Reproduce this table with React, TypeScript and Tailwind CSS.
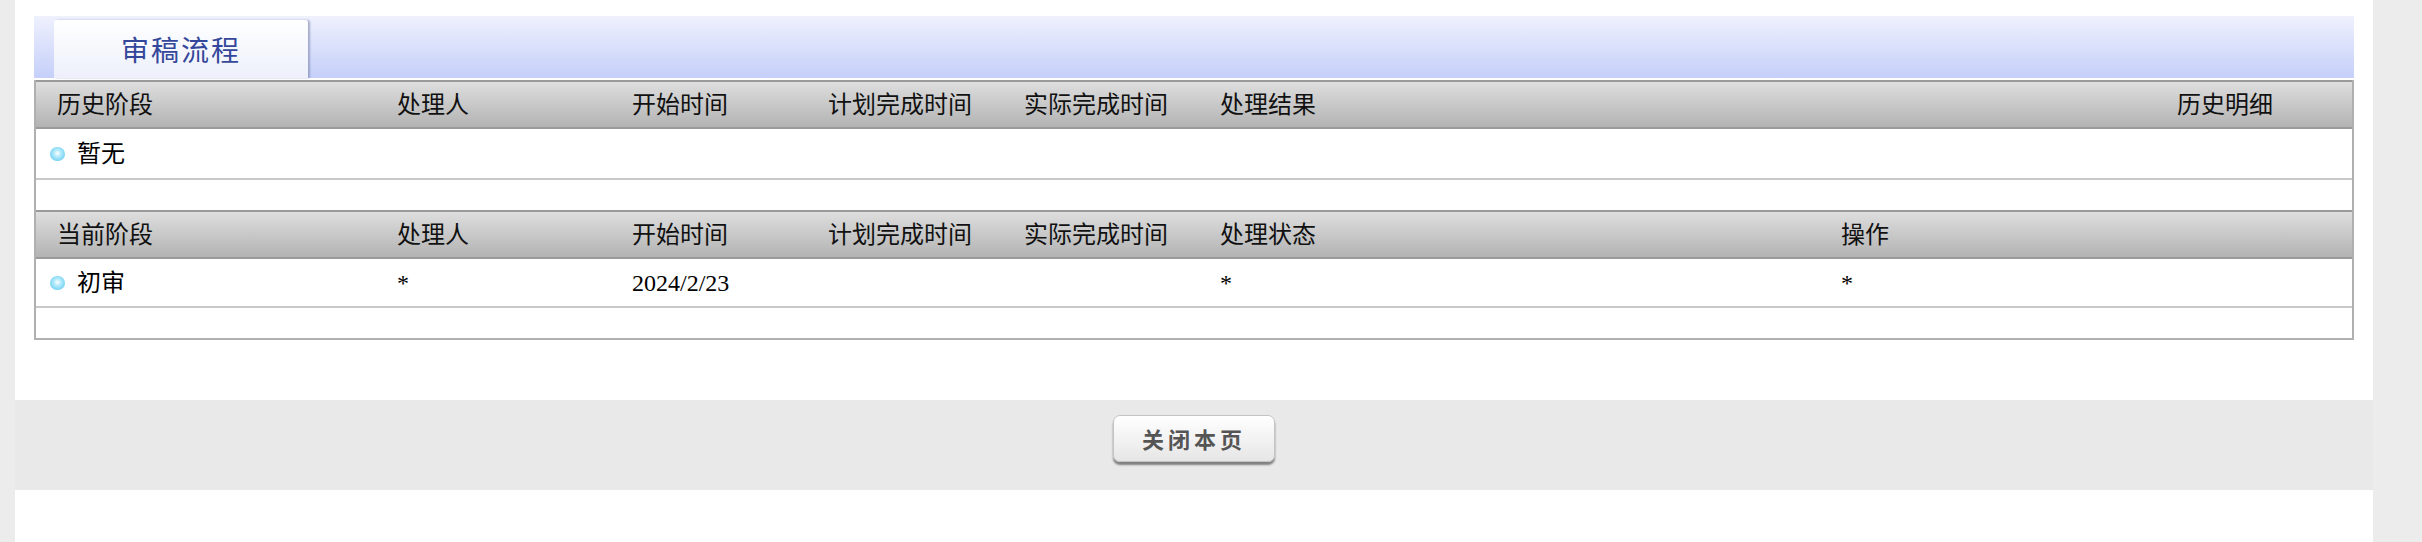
const font = { fontFamily: '"Liberation Serif", "Noto Sans CJK SC", serif' };

const historyHead = ['历史阶段', '处理人', '开始时间', '计划完成时间', '实际完成时间', '处理结果', '历史明细'];
const currentHead = ['当前阶段', '处理人', '开始时间', '计划完成时间', '实际完成时间', '处理状态', '操作'];
const currentRow = ['初审', '*', '2024/2/23', '', '', '*', '*'];

function Bullet() {
  return (
    <span className="inline-block w-[15px] h-[14px] rounded-full bg-[radial-gradient(circle_at_50%_45%,#ffffff_0%,#b8ecfc_30%,#4ec4ee_100%)] mr-[12px]" />
  );
}

function HeadRow({ cols, grid }: { cols: string[]; grid: string }) {
  return (
    <div className={`grid ${grid} h-[49px] border-y-2 border-[#9a9a9a] bg-gradient-to-b from-[#dedede] to-[#b3b3b3] text-[24px] text-[#111]`}>
      {cols.map((c, i) => (
        <div key={i} className="pl-[21px] flex items-center whitespace-nowrap">
          {c}
        </div>
      ))}
    </div>
  );
}

function DataRow({ cols, grid }: { cols: string[]; grid: string }) {
  return (
    <div className={`grid ${grid} h-[49px] border-b-2 border-[#c8c8c8] text-[24px] text-black`}>
      {cols.map((c, i) =>
        i === 0 ? (
          <div key={i} className="pl-[14px] flex items-center whitespace-nowrap">
            <Bullet />
            {c}
          </div>
        ) : (
          <div key={i} className="pl-[21px] flex items-center whitespace-nowrap">
            {c}
          </div>
        )
      )}
    </div>
  );
}

export default function App() {
  const histGrid = 'grid-cols-[340px_235px_196px_196px_196px_1fr_196px]';
  const curGrid = 'grid-cols-[340px_235px_196px_196px_196px_621px_1fr]';

  return (
    <div className="flex h-[542px] w-full bg-[#ececec]" style={font}>
      <div className="w-[15px] shrink-0" />
      <div className="flex-1 bg-white flex flex-col">
        <div className="px-[19px] pt-[16px]">
          {/* tab bar */}
          <div className="h-[62px] bg-gradient-to-b from-[#eff1fd] to-[#c5cff9] flex items-end pl-[20px]">
            <div className="w-[254px] h-[58px] bg-gradient-to-b from-white to-[#edf0fb] rounded-t-[3px] shadow-[2px_0_2px_rgba(120,130,170,0.6)] flex items-center justify-center">
              <span className="text-[28px] text-[#34479a] tracking-[2px]" style={{ fontFamily: '"Noto Sans CJK SC", sans-serif' }}>
                审稿流程
              </span>
            </div>
          </div>

          {/* table */}
          <div className="mt-[2px] border-x-2 border-b-2 border-[#b0b0b0]">
            <HeadRow cols={historyHead} grid={histGrid} />
            <div className="h-[51px] border-b-2 border-[#c8c8c8] flex items-center pl-[14px] text-[24px]">
              <Bullet />
              暂无
            </div>
            <div className="h-[30px]" />
            <HeadRow cols={currentHead} grid={curGrid} />
            <DataRow cols={currentRow} grid={curGrid} />
            <div className="h-[30px]" />
          </div>
        </div>

        {/* footer */}
        <div className="mt-[60px] h-[90px] bg-[#e9e9e9] flex justify-center pt-[15px]">
          <button className="w-[162px] h-[47px] rounded-[7px] border border-[#c4c4c4] bg-gradient-to-b from-white to-[#e6e6e6] shadow-[0_3px_2px_rgba(0,0,0,0.45)] text-[22px] font-bold text-[#555] tracking-[4px]" style={{ fontFamily: '"Noto Sans CJK SC", sans-serif' }}>
            关闭本页
          </button>
        </div>
      </div>
      <div className="w-[49px] shrink-0" />
    </div>
  );
}
